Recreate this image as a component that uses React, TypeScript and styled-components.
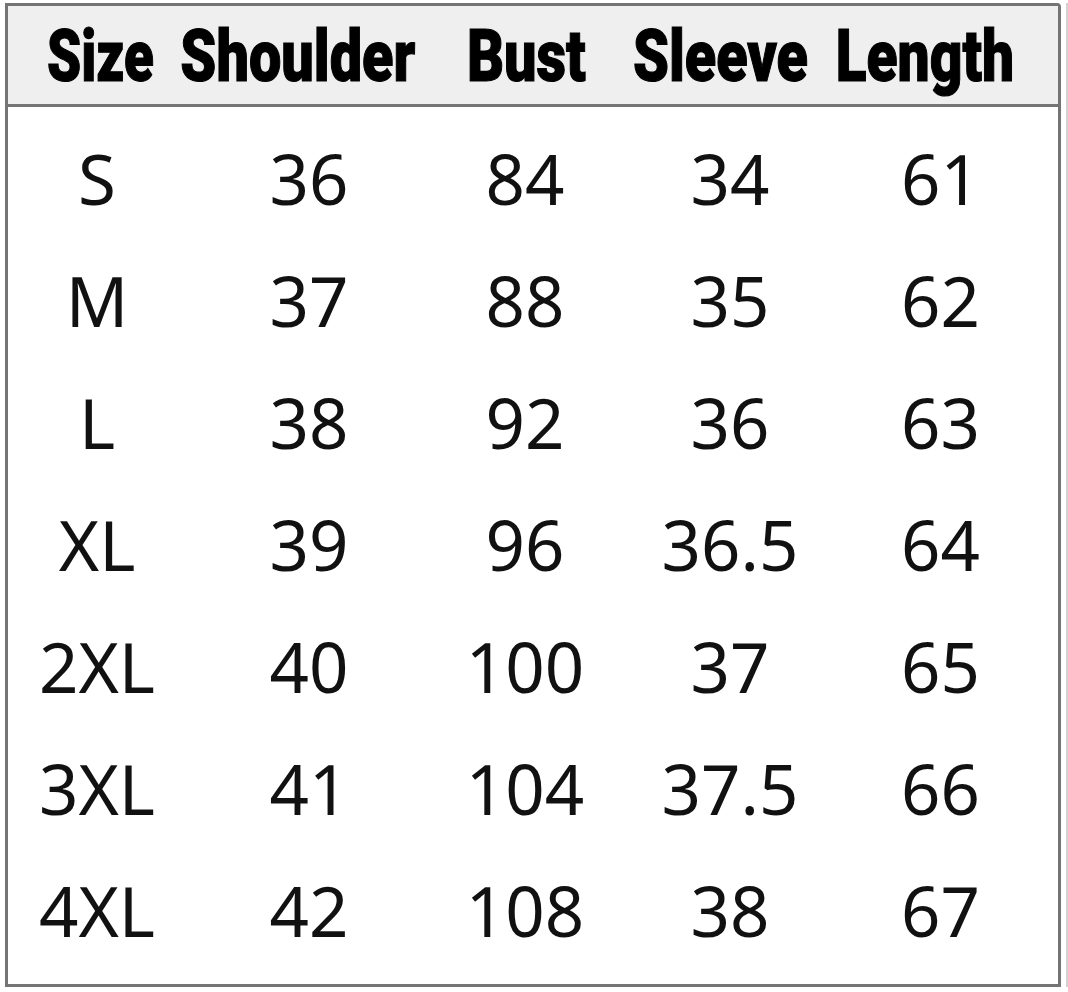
import React from "react";
import styled, { createGlobalStyle } from "styled-components";

const Global = createGlobalStyle`
  html, body { margin: 0; padding: 0; background: #ffffff; }
  body { width: 1068px; height: 992px; overflow: hidden; }
`;

const Page = styled.div`
  width: 1068px;
  height: 992px;
  box-sizing: border-box;
  padding: 3px 0 5px 5px;
  display: flex;
`;

const Frame = styled.div`
  flex: 1;
  display: flex;
  padding-right: 5px;
  border-right: 2px solid #d2d2d2;
`;

const Table = styled.div`
  flex: 1;
  box-sizing: border-box;
  border: 3px solid #747474;
  border-top-right-radius: 4px;
  display: flex;
  flex-direction: column;
`;

const HeaderRow = styled.div`
  display: grid;
  grid-template-columns: 184px 212px 244px 144px 1fr;
  height: 98px;
  background: #efefef;
  border-bottom: 3px solid #747474;
  align-items: center;
  padding-right: 1px;
`;

const HeadCell = styled.div`
  display: flex;
  justify-content: center;
  overflow: visible;
  white-space: nowrap;
  padding-top: 4px;
`;

const HeadLabel = styled.span<{ $squeeze: number }>`
  display: inline-block;
  font-family: "Roboto", "Liberation Sans", sans-serif;
  font-weight: 900;
  font-size: 72px;
  line-height: 1;
  color: #000;
  letter-spacing: 0;
  -webkit-text-stroke: 1.2px #000;
  transform: scaleX(${(p) => p.$squeeze});
  transform-origin: center;
`;

const Body = styled.div`
  flex: 1;
  display: flex;
  flex-direction: column;
  padding: 10px 0 12px;
`;

const Row = styled.div`
  display: grid;
  grid-template-columns: 178px 246px 186px 224px 1fr;
  padding-right: 19px;
  flex: 1;
  align-items: center;
`;

const Cell = styled.div`
  text-align: center;
  font-family: "Noto Sans", "Open Sans", sans-serif;
  font-weight: 400;
  font-size: 69px;
  line-height: 1;
  color: #111;
  white-space: nowrap;
`;

const headers: [string, number][] = [
  ["Size", 0.76],
  ["Shoulder", 0.8],
  ["Bust", 0.8],
  ["Sleeve", 0.8],
  ["Length", 0.79],
];
const rows = [
  ["S", "36", "84", "34", "61"],
  ["M", "37", "88", "35", "62"],
  ["L", "38", "92", "36", "63"],
  ["XL", "39", "96", "36.5", "64"],
  ["2XL", "40", "100", "37", "65"],
  ["3XL", "41", "104", "37.5", "66"],
  ["4XL", "42", "108", "38", "67"],
];

export default function App() {
  return (
    <>
      <Global />
      <Page>
        <Frame>
          <Table>
            <HeaderRow>
              {headers.map(([h, s]) => (
                <HeadCell key={h}>
                  <HeadLabel $squeeze={s}>{h}</HeadLabel>
                </HeadCell>
              ))}
            </HeaderRow>
            <Body>
              {rows.map((r) => (
                <Row key={r[0]}>
                  {r.map((c, i) => (
                    <Cell key={i}>{c}</Cell>
                  ))}
                </Row>
              ))}
            </Body>
          </Table>
        </Frame>
      </Page>
    </>
  );
}
